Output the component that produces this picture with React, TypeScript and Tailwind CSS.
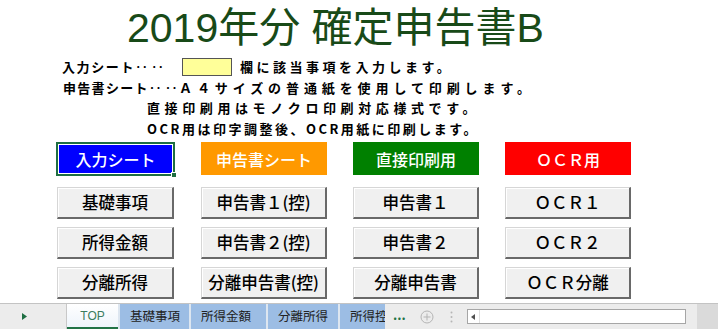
import type { ReactNode } from 'react';

const JP = "font-['Noto_Sans_CJK_JP',sans-serif]";

const HEADERS = [
  { label: '申告書シート', bg: 'bg-[#ff9900]' },
  { label: '直接印刷用', bg: 'bg-[#008000]' },
  { label: 'ＯＣＲ用', bg: 'bg-[#ff0000]' },
];

const ROWS: string[][] = [
  ['基礎事項', '申告書１(控)', '申告書１', 'ＯＣＲ１'],
  ['所得金額', '申告書２(控)', '申告書２', 'ＯＣＲ２'],
  ['分離所得', '分離申告書(控)', '分離申告書', 'ＯＣＲ分離'],
];

const SHEETS = [
  { label: '基礎事項', w: 'w-[71px]' },
  { label: '所得金額', w: 'w-[77px]' },
  { label: '分離所得', w: 'w-[72px]' },
];

function GrayButton({ children, first }: { children: ReactNode; first?: boolean }) {
  return (
    <button
      type="button"
      className={`flex h-[32px] items-center justify-center border-t border-l border-[#d6d6d6] border-r-2 border-b-2 border-r-[#696969] border-b-[#696969] bg-[#f0f0f0] text-[16.5px] font-medium text-black shadow-[inset_1px_1px_0_#ffffff] ${
        first ? 'mx-[1px]' : ''
      }`}
    >
      {children}
    </button>
  );
}

export default function App() {
  return (
    <div className={`flex h-[329px] w-[718px] flex-col overflow-hidden bg-white ${JP}`}>
      <main className="h-[303px]">
        <h1 className="h-[56.5px] pl-[127px] pt-[8px] font-['Liberation_Sans','Noto_Sans_CJK_JP',sans-serif] text-[41px] leading-[41px] text-[#184a18]">
          2019年分 確定申告書B
        </h1>

        <div className="whitespace-nowrap text-[13px] font-bold text-black">
          <div className="flex h-[20.5px] items-center pl-[62px]">
            <span className="flex w-[120px] shrink-0">
              <span className="tracking-[1.6px]">入力シート</span>
              <span className="tracking-[3px]">‥‥</span>
            </span>
            <span className="h-[18px] w-[50px] shrink-0 border border-[#555555] bg-[#ffff99]" />
            <span className="ml-[8px] tracking-[3.5px]">欄に該当事項を入力します。</span>
          </div>
          <div className="flex h-[20.5px] items-center pl-[63px]">
            <span className="flex w-[116px] shrink-0">
              <span className="tracking-[1.3px]">申告書シート</span>
              <span className="tracking-[3px]">‥‥</span>
            </span>
            <span className="tracking-[4.9px]">Ａ４サイズの普通紙を使用して印刷します。</span>
          </div>
          <div className="flex h-[20.5px] items-center pl-[147px] tracking-[4.6px]">
            直接印刷用はモノクロ印刷対応様式です。
          </div>
          <div className="flex h-[20.5px] items-center pl-[147px] tracking-[2.5px]">
            OCR用は印字調整後、OCR用紙に印刷します。
          </div>
        </div>

        <div className="ml-[56px] mt-[3.5px]">
          <div className="grid grid-cols-[119px_126px_126px_126px] gap-x-[26px]">
            <div className="relative h-[34px] border-2 border-[#1e6e42] bg-white p-[1px]">
              <div className="flex h-full items-center justify-center bg-[#0000ff] text-[16px] font-medium text-white">
                入力シート
              </div>
              <span className="absolute -bottom-[4px] -right-[4px] h-[6px] w-[6px] border border-white bg-[#1e6e42]" />
            </div>
            {HEADERS.map((h) => (
              <div
                key={h.label}
                className={`flex h-[33px] items-center justify-center text-[16px] font-medium text-white ${h.bg}`}
              >
                {h.label}
              </div>
            ))}
          </div>

          <div className="mt-[11px] grid grid-cols-[119px_126px_126px_126px] gap-x-[26px] gap-y-[8px]">
            {ROWS.map((row) =>
              row.map((label, i) => (
                <GrayButton key={label} first={i === 0}>
                  {label}
                </GrayButton>
              )),
            )}
          </div>
        </div>
      </main>

      <footer className="flex h-[26px] border-t border-[#c3c3c3] bg-[#ececec]">
        <div className="flex w-[67px] items-center border-r border-[#c8c8c8] pl-[22px]">
          <svg width="5" height="7" viewBox="0 0 5 7">
            <path d="M0 0 L5 3.5 L0 7 Z" fill="#1e6e42" />
          </svg>
        </div>
        <div className="flex w-[51px] items-center justify-center border-b-2 border-[#217346] bg-gradient-to-b from-white to-[#eef4fb] font-['Liberation_Sans',sans-serif] text-[12px] text-[#3b7d5e]">
          TOP
        </div>
        {SHEETS.map((s) => (
          <div
            key={s.label}
            className={`flex items-center whitespace-nowrap border-l-2 border-[#dde6f0] bg-[#9cbde4] pl-[10px] text-[12.5px] text-[#222222] ${s.w}`}
          >
            {s.label}
          </div>
        ))}
        <div className="flex w-[47px] items-center overflow-hidden border-l-2 border-[#dde6f0] bg-[#9cbde4] pl-[10px]">
          <span className="w-[35px] overflow-hidden whitespace-nowrap text-[12.5px] text-[#222222]">所得控</span>
        </div>
        <div className="ml-[8px] flex items-center pb-[3px] text-[13px] font-bold text-[#217346]">...</div>
        <div className="ml-[14px] flex items-center">
          <svg width="14" height="14" viewBox="0 0 14 14">
            <circle cx="7" cy="7" r="6" fill="none" stroke="#b5b5b5" strokeWidth="1" />
            <path d="M7 3.5 V10.5 M3.5 7 H10.5" stroke="#b5b5b5" strokeWidth="1" />
          </svg>
        </div>
        <div className="ml-[16px] flex items-center">
          <svg width="3" height="12" viewBox="0 0 3 12">
            <circle cx="1.5" cy="1.5" r="1" fill="#b5b5b5" />
            <circle cx="1.5" cy="6" r="1" fill="#b5b5b5" />
            <circle cx="1.5" cy="10.5" r="1" fill="#b5b5b5" />
          </svg>
        </div>
        <div className="ml-[14px] flex items-center">
          <div className="flex h-[15px] w-[219px] border border-[#a6a6a6] bg-white">
            <div className="flex w-[12px] items-center justify-center border-r border-[#e0e0e0]">
              <svg width="4" height="6" viewBox="0 0 4 6">
                <path d="M4 0 L0 3 L4 6 Z" fill="#505050" />
              </svg>
            </div>
          </div>
        </div>
        <div className="ml-auto w-[21px] bg-[#dadada]" />
      </footer>
    </div>
  );
}
